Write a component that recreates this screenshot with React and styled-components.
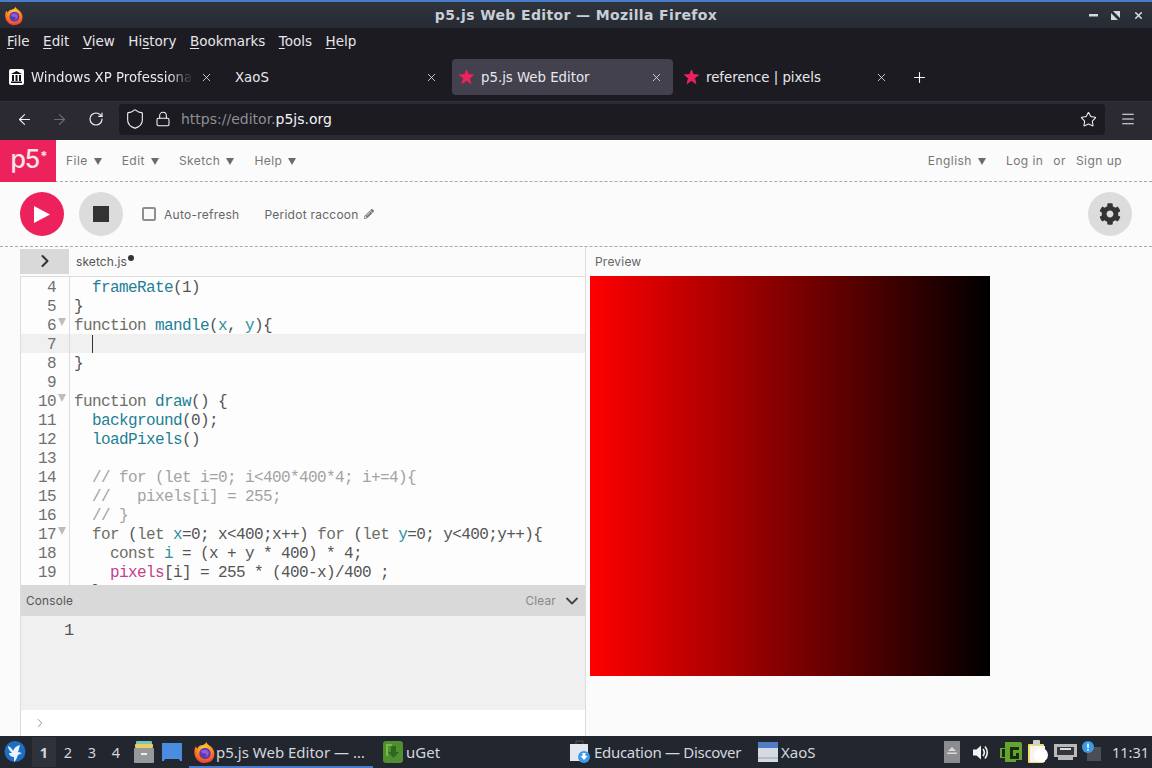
import React from "react";
import styled, { createGlobalStyle } from "styled-components";
import { ArrowLeft, ArrowRight, RotateCw, Shield, Lock, Star, Menu as MenuIcon, X, Plus, ChevronRight, ChevronDown } from "lucide-react";
import { FaCog, FaPencilAlt } from "react-icons/fa";

const Global = createGlobalStyle`
  html, body { margin: 0; padding: 0; height: 768px; overflow: hidden; background: #fbfbfb; }
  * { box-sizing: border-box; }
  #root { height: 768px; }
`;

const Screen = styled.div`
  width: 1152px; height: 768px; display: flex; flex-direction: column; overflow: hidden;
  font-family: "DejaVu Sans", sans-serif;
`;

/* window chrome */
const TitleBar = styled.header`
  height: 28px; flex: none; border-top: 2px solid #4a7dc9; display: flex; align-items: center; justify-content: center; position: relative;
  background: linear-gradient(#30343d, #262a32); color: #c9ced6; font-weight: 700; font-size: 14px; letter-spacing: 0.37px; padding-bottom: 1px;
`;
const WinLogo = styled.span` position: absolute; left: 4px; top: 4px; display: flex; `;
const WinButtons = styled.div`
  position: absolute; right: 8px; top: 0; height: 26px; display: flex; align-items: center; gap: 13px; color: #d5d8dd;
`;
const MenuBar = styled.nav`
  height: 27px; flex: none; background: #1c1b22; color: #e6e6ea; display: flex; align-items: center; gap: 13.5px; padding: 0 0 2px 7px; font-size: 13.5px;
  u { text-decoration-thickness: 1px; text-underline-offset: 2px; }
`;
const TabStrip = styled.div`
  height: 46px; flex: none; background: #1c1b22; display: flex; align-items: center; gap: 4px; padding: 1px 0 3px 2px;
`;
const Tab = styled.div`
  width: 221px; height: 36px; display: flex; align-items: center; padding: 0 10px 0 7px; border-radius: 4px; gap: 7px;
  background: ${(p) => (p.$active ? "#42414d" : "transparent")}; color: #e8e8ec; font-size: 13.3px;
`;
const TabIcon = styled.span` width: 15px; height: 16px; flex: none; display: flex; align-items: center; justify-content: center; `;
const TabLabel = styled.span`
  flex: 1; white-space: nowrap; overflow: hidden;
  padding-left: ${(p) => (p.$plain ? "1px" : "0")};
  ${(p) => p.$fade && "-webkit-mask-image: linear-gradient(90deg,#000 85%,transparent);"}
`;
const NewTab = styled.span` display: flex; margin-left: 9px; color: #fbfbfe; `;
const NavBar = styled.div`
  height: 39px; flex: none; background: #2b2a33; border-top: 1px solid #33323c; display: flex; align-items: center; color: #f2f2f6; padding: 0 14px 4px 16px;
`;
const NavSlot = styled.span` display: flex; margin-right: ${(p) => p.$gap}px; `;
const UrlBar = styled.div`
  width: 986px; height: 31px; background: #1c1b22; border-radius: 4px; display: flex; align-items: center; padding: 0 8px 0 5px; gap: 9px; font-size: 14px; margin-right: 15px;
`;
const UrlText = styled.span` flex: 1; color: #8f8e96; margin-left: 1px; b { font-weight: 400; color: #f4f4f7; } `;

/* p5 editor */
const AppNav = styled.div`
  height: 42px; flex: none; display: flex; align-items: center; border-bottom: 1px dashed #a9a9a9; background: #fbfbfb;
  font-family: Inter, sans-serif; font-size: 12px; letter-spacing: 0.45px; color: #777;
`;
const Logo = styled.div`
  width: 56px; height: 42px; background: #ed225d; color: #fbe4ea; font-family: Inter, sans-serif; font-weight: 500; font-size: 25px; letter-spacing: -1px; display: flex; align-items: center; justify-content: center; margin-right: 10px; padding: 0 0 3px 1px;
  sup { font-size: 13px; font-weight: 700; line-height: 0; position: relative; top: -3px; margin-left: 1px; }
`;
const NavItem = styled.span` display: flex; align-items: center; gap: 6px; margin-right: ${(p) => p.$gap || 0}px; `;
const Caret = styled.span`
  width: 0; height: 0; border-left: 4.5px solid transparent; border-right: 4.5px solid transparent; border-top: 7px solid #6b6b6b; margin-top: 1px;
`;
const Spacer = styled.div` flex: 1; `;
const ToolBar = styled.div`
  height: 65px; flex: none; display: flex; align-items: center; padding: 0 20px; border-bottom: 1px dashed #a9a9a9; background: #fbfbfb;
  font-family: Inter, sans-serif; font-size: 12px; letter-spacing: 0.25px; color: #666;
`;
const RoundButton = styled.button`
  width: 44px; height: 44px; border: 0; padding: 0; border-radius: 50%; display: flex; align-items: center; justify-content: center; flex: none;
  background: ${(p) => (p.$primary ? "#ed225d" : "#dcdcdc")}; margin-right: ${(p) => p.$gap || 0}px;
`;
const Check = styled.span` width: 14px; height: 14px; border: 2px solid #8f8f8f; border-radius: 2px; margin-right: 8px; background: #fbfbfb; `;
const SketchName = styled.span` display: flex; align-items: center; gap: 5px; margin-left: 25px; `;
const Workspace = styled.main` flex: 1; min-height: 0; display: flex; padding-left: 20px; background: #fbfbfb; `;
const LeftPane = styled.section` width: 566px; flex: none; display: flex; flex-direction: column; border-right: 1px solid #dcdcdc; `;
const EditorHead = styled.div`
  height: 29px; flex: none; display: flex; align-items: center; font-family: Inter, sans-serif; font-size: 12px; letter-spacing: 0.1px; color: #555;
`;
const Collapse = styled.div` width: 49px; height: 25px; margin-top: -1px; background: #d9d9d9; display: flex; align-items: center; justify-content: center; color: #333; margin-right: 7px; `;
const FileDot = styled.span` width: 6px; height: 6px; border-radius: 50%; background: #333; margin: -7px 0 0 1px; `;
const Code = styled.div`
  height: 309px; flex: none; overflow: hidden; border-left: 1px solid #dcdcdc; border-top: 1px solid #dcdcdc; background: #fdfdfd;
  font-family: "Liberation Mono", monospace; font-size: 16px; letter-spacing: -0.6px; color: #555;
`;
const Line = styled.div`
  height: 19px; line-height: 22px; display: flex; white-space: pre; background: ${(p) => (p.$active ? "#f0f0f0" : "transparent")};
`;
const Gutter = styled.div` width: 49px; flex: none; display: flex; border-right: 1px solid #dcdcdc; color: #707070; `;
const LineNo = styled.span` width: 35px; text-align: right; `;
const Fold = styled.span`
  margin: 3px 0 0 2px; width: 0; height: 0; border-left: 4.5px solid transparent; border-right: 4.5px solid transparent; border-top: 8px solid #bdbdbd;
`;
const CodeText = styled.div` padding-left: 4px; position: relative; `;
const Cursor = styled.span` position: absolute; left: 22px; top: 1px; width: 1px; height: 18px; background: #333; `;
const TOKEN = { b: "#1f7f96", v: "#2f8f9f", c: "#a3a3a3", p: "#c6408f", k: "#6e6e66" };
const Tok = styled.span` color: ${(p) => TOKEN[p.$k] || "#555"}; `;
const ConsoleHead = styled.div`
  height: 31px; flex: none; background: #d9d9d9; border-left: 1px solid #dcdcdc; display: flex; align-items: center; padding: 1px 3px 0 5px; font-family: Inter, sans-serif; font-size: 11.8px; letter-spacing: 0.2px; color: #555;
`;
const ClearLabel = styled.span` color: #888; margin-right: 6px; `;
const ConsoleBody = styled.div`
  height: 94px; flex: none; background: #f0f0f0; border-left: 1px solid #dcdcdc; font-family: "Liberation Mono", monospace; font-size: 17px; color: #555; padding: 5px 0 0 43px;
`;
const ConsoleInput = styled.div` flex: 1; background: #fff; border-left: 1px solid #dcdcdc; display: flex; align-items: center; padding-left: 12px; color: #8a8a8a; `;
const Preview = styled.section` flex: 1; display: flex; flex-direction: column; padding-left: 4px; `;
const PreviewLabel = styled.div` height: 29px; display: flex; align-items: center; padding-left: 5px; font-family: Inter, sans-serif; font-size: 12px; letter-spacing: 0.2px; color: #666; `;
const Canvas = styled.div` width: 400px; height: 400px; background: linear-gradient(90deg, #ff0000, #000000); `;

/* panel */
const TaskBar = styled.footer`
  height: 32px; flex: none; background: #22262f; color: #d4d7dc; display: flex; align-items: center; font-family: "Noto Sans", sans-serif; font-size: 15px;
`;
const Desk = styled.span`
  width: 24px; height: 30px; display: flex; align-items: center; justify-content: center; font-size: 14.5px;
  background: ${(p) => (p.$on ? "#2e323b" : "transparent")}; font-weight: ${(p) => (p.$on ? 700 : 400)}; border-radius: 2px;
`;
const Slot = styled.span` display: flex; align-items: center; flex: none; margin-left: ${(p) => p.$l || 0}px; `;
const TaskItem = styled.div`
  height: 32px; display: flex; align-items: center; flex: none; gap: ${(p) => p.$g || 0}px; width: ${(p) => p.$w}px; margin-left: ${(p) => p.$l || 0}px; padding-left: ${(p) => p.$pad || 0}px;
  letter-spacing: ${(p) => p.$ls || 0}px;
  border-bottom: ${(p) => (p.$on ? "2px solid #4a7dc9" : "0")}; padding-top: ${(p) => (p.$on ? "2px" : "0")}; white-space: nowrap;
`;
const Clock = styled.span` margin-left: 11px; font-size: 14.5px; `;

const Firefox = ({ s = 20, id = "ffg" }) => (
  <svg width={s} height={s} viewBox="0 0 24 24">
    <defs>
      <radialGradient id={id} cx="0.5" cy="0.3" r="0.8"><stop offset="0" stopColor="#ffd43a" /><stop offset="0.55" stopColor="#ff7a1f" /><stop offset="1" stopColor="#e8243f" /></radialGradient>
    </defs>
    <path d="M14 1c1 3 3 3 5 5 3 3 4 7 3 10-1 5-5 7-10 7S2 19 1.500 13C1 9 2 7 3 5.500c.2 1 .7 1.800 1.500 2.300C6 5 8 4.500 9 4.500 11 4 13 3 14 1z" fill={`url(#${id})`} />
    <circle cx="12.500" cy="13" r="6" fill="#5b3bb0" />
    <path d="M8 11c2-2 6-3 8 0 1 2 0 5-3 6 2-2 1-4-1-4-2 0-3-1-4-2z" fill="#9a5ad6" />
  </svg>
);
const PinkStar = () => (
  <svg width="17" height="16" viewBox="0 0 17 16" fill="#ed225d">
    <path d="M8.500 0 10.600 5.300 16.500 5.600 11.900 9.300 13.500 15.500 8.500 12 3.500 15.500 5.100 9.300 .5 5.600 6.400 5.300z" stroke="#ed225d" strokeWidth="1" strokeLinejoin="round" />
  </svg>
);
const Museum = () => (
  <svg width="15" height="16" viewBox="0 0 15 16">
    <rect width="15" height="16" rx="2" fill="#fff" />
    <path d="M7.500 2 13 5H2zM3 6h2v6H3zM6.500 6h2v6h-2zM10 6h2v6h-2zM2 12.500h11V14H2z" fill="#111" />
  </svg>
);
const Dove = () => (
  <svg width="22" height="24" viewBox="0 0 22 24">
    <circle cx="11" cy="11.500" r="10.500" fill="#1d6fc4" />
    <path d="M4 6c3 1 4 3 5 5 1-3 3-5 7-6-1 3-1 5-2 7l4 1-4 2c-1 3-2 5-4 7l0-5c-3 0-5-2-5-4l3 0C6 11 4 9 4 6z" fill="#e8f3ff" />
  </svg>
);
const Cabinet = () => (
  <svg width="20" height="24" viewBox="0 0 20 24">
    <rect x="2" y="1" width="16" height="4" rx="1" fill="#7cc5b0" />
    <rect x="1" y="4" width="18" height="4" rx="1" fill="#e3d26a" />
    <rect x="0" y="8" width="20" height="15" rx="1" fill="#97999c" />
    <rect x="7" y="13" width="6" height="2" fill="#eee" />
  </svg>
);
const BlueWindow = () => (
  <svg width="20" height="20" viewBox="0 0 20 20"><path d="M0 1h20v18h-2l-1-2H3l-1 2H0z" fill="#4a8ce0" /></svg>
);
const UGet = () => (
  <svg width="20" height="22" viewBox="0 0 20 22">
    <rect width="20" height="22" rx="3" fill="#4f8f2f" />
    <path d="M8 5h5v6h3l-5.500 6L5 11h3z" fill="#2b6a1f" />
    <path d="M3 3h6v2H5v10H3z" fill="#77b84a" />
  </svg>
);
const Bag = () => (
  <svg width="20" height="24" viewBox="0 0 20 24">
    <path d="M6 4V1h7v3" fill="none" stroke="#555" strokeWidth="1" />
    <rect x="0" y="4" width="18" height="17" fill="#e4e8ee" />
    <circle cx="14" cy="17" r="6" fill="#3d9ae8" />
    <path d="M12.500 13h3v3h2L14 20l-3.500-4h2z" fill="#fff" />
  </svg>
);
const XaosWin = () => (
  <svg width="20" height="20" viewBox="0 0 20 20">
    <rect width="20" height="20" fill="#d5d9e2" />
    <rect width="20" height="6" fill="#4f7cc4" />
    <rect y="15" width="20" height="2" fill="#b9bcc6" />
  </svg>
);
const TrayEject = () => (
  <svg width="16" height="22" viewBox="0 0 16 22">
    <rect width="16" height="22" fill="#8b8d90" />
    <path d="M8 6l4 4H4zM3 11.500h10V13H3z" fill="#d9d9d9" />
  </svg>
);
const TraySpeaker = () => (
  <svg width="17" height="17" viewBox="0 0 17 17" fill="none">
    <path d="M1 5.500h3.500L9 1.500v14l-4.500-4H1z" fill="#f4f4f4" />
    <path d="M11 5c1.500 2 1.500 5 0 7M13 2.500c3 3.500 3 8.500 0 12" stroke="#f4f4f4" strokeWidth="1.600" />
  </svg>
);
const TrayG = () => (
  <svg width="23" height="22" viewBox="0 0 23 22">
    <path d="M6 1h15a2 2 0 0 1 2 2v16h-6v2H6V17H1V7h5z" fill="#63a52f" />
    <path d="M11 6h9v3h-6v6h3v-3h3v6h-9z" fill="#1c2a15" />
    <path d="M3 8h3v8H3z" fill="#1c2a15" />
  </svg>
);
const TrayClip = () => (
  <svg width="20" height="24" viewBox="0 0 20 24">
    <rect x="0" y="4" width="16" height="19" rx="1" fill="#efe06a" />
    <rect x="2" y="6" width="15" height="16" fill="#f4f4f4" />
    <rect x="5" y="0" width="7" height="5" rx="1" fill="#cfcfcf" />
    <circle cx="13" cy="15" r="7" fill="#fff" />
  </svg>
);
const TrayNet = () => (
  <svg width="23" height="18" viewBox="0 0 23 18">
    <path d="M0 1h23v13h-4v3H4v-3H0z" fill="#b9b9b9" />
    <path d="M3 4h17v8H3z" fill="#33363c" />
    <path d="M6 5h11v2H6z" fill="#ddd" />
  </svg>
);
const TrayBell = () => (
  <svg width="19" height="22" viewBox="0 0 19 22">
    <rect x="5" y="6" width="14" height="14" fill="#4b4e55" />
    <circle cx="6" cy="6" r="6" fill="#3d9ae8" />
    <rect x="5.200" y="2.500" width="1.600" height="4.500" fill="#fff" />
    <rect x="5.200" y="8" width="1.600" height="1.600" fill="#fff" />
  </svg>
);

const CODE = [
  [4, [["  "], ["frameRate", "b"], ["(1)"]]],
  [5, [["}"]]],
  [6, [["function", "k"], [" "], ["mandle", "b"], ["("], ["x", "v"], [", "], ["y", "v"], ["){"]], true],
  [7, [], false, true],
  [8, [["}"]]],
  [9, []],
  [10, [["function", "k"], [" "], ["draw", "b"], ["() {"]], true],
  [11, [["  "], ["background", "b"], ["(0);"]]],
  [12, [["  "], ["loadPixels", "b"], ["()"]]],
  [13, []],
  [14, [["  // for (let i=0; i<400*400*4; i+=4){", "c"]]],
  [15, [["  //   pixels[i] = 255;", "c"]]],
  [16, [["  // }", "c"]]],
  [17, [["  "], ["for", "k"], [" ("], ["let", "k"], [" "], ["x", "v"], ["=0; x<400;x++) "], ["for", "k"], [" ("], ["let", "k"], [" "], ["y", "v"], ["=0; y<400;y++){"]], true],
  [18, [["    "], ["const", "k"], [" "], ["i", "v"], [" = (x + y * 400) * 4;"]]],
  [19, [["    "], ["pixels", "p"], ["[i] = 255 * (400-x)/400 ;"]]],
  [20, [["  }"]]],
];

const TABS = [
  { label: "Windows XP Professional", icon: <Museum />, fade: true },
  { label: "XaoS", plain: true },
  { label: "p5.js Web Editor", icon: <PinkStar />, active: true },
  { label: "reference | pixels", icon: <PinkStar /> },
];

export default function App() {
  return (
    <Screen>
      <Global />
      <TitleBar>
        <WinLogo><Firefox s={20} id="ffa" /></WinLogo>
        p5.js Web Editor — Mozilla Firefox
        <WinButtons>
          <svg width="9" height="9" viewBox="0 0 9 9"><rect y="3" width="9" height="2.500" fill="currentColor" /></svg>
          <svg width="9" height="9" viewBox="0 0 9 9"><path d="M0 2v7h7zM2 0h7v7z" fill="currentColor" /></svg>
          <X size={11} strokeWidth={3.500} />
        </WinButtons>
      </TitleBar>
      <MenuBar>
        <span><u>F</u>ile</span>
        <span><u>E</u>dit</span>
        <span><u>V</u>iew</span>
        <span>Hi<u>s</u>tory</span>
        <span><u>B</u>ookmarks</span>
        <span><u>T</u>ools</span>
        <span><u>H</u>elp</span>
      </MenuBar>
      <TabStrip>
        {TABS.map((t) => (
          <Tab key={t.label} $active={t.active}>
            {t.icon && <TabIcon>{t.icon}</TabIcon>}
            <TabLabel $fade={t.fade} $plain={t.plain}>{t.label}</TabLabel>
            <X size={13} strokeWidth={1.500} />
          </Tab>
        ))}
        <NewTab><Plus size={17} strokeWidth={1.500} /></NewTab>
      </TabStrip>
      <NavBar>
        <NavSlot $gap={18}><ArrowLeft size={17} strokeWidth={1.600} /></NavSlot>
        <NavSlot $gap={20}><ArrowRight size={17} strokeWidth={1.600} color="#6d6c75" /></NavSlot>
        <NavSlot $gap={15}><RotateCw size={16} strokeWidth={1.700} /></NavSlot>
        <UrlBar>
          <Shield size={22} strokeWidth={1.200} />
          <Lock size={16} strokeWidth={1.600} />
          <UrlText>https://editor.<b>p5js.org</b></UrlText>
          <Star size={17} strokeWidth={1.500} />
        </UrlBar>
        <MenuIcon size={16} strokeWidth={1.600} />
      </NavBar>

      <AppNav>
        <Logo>p5<sup>*</sup></Logo>
        <NavItem $gap={20}>File <Caret /></NavItem>
        <NavItem $gap={20}>Edit <Caret /></NavItem>
        <NavItem $gap={20}>Sketch <Caret /></NavItem>
        <NavItem>Help <Caret /></NavItem>
        <Spacer />
        <NavItem $gap={20}>English <Caret /></NavItem>
        <NavItem $gap={10}>Log in</NavItem>
        <NavItem $gap={10}>or</NavItem>
        <NavItem $gap={30}>Sign up</NavItem>
      </AppNav>
      <ToolBar>
        <RoundButton $primary $gap={15}>
          <svg width="16" height="17" viewBox="0 0 16 17"><path d="M0 0l16 8.500L0 17z" fill="#fff" /></svg>
        </RoundButton>
        <RoundButton $gap={19}>
          <svg width="16" height="16" viewBox="0 0 16 16"><rect width="16" height="16" fill="#333" /></svg>
        </RoundButton>
        <Check />
        <span>Auto-refresh</span>
        <SketchName>Peridot raccoon <FaPencilAlt size={10} color="#777" /></SketchName>
        <Spacer />
        <RoundButton><FaCog size={22} color="#333" /></RoundButton>
      </ToolBar>
      <Workspace>
        <LeftPane>
          <EditorHead>
            <Collapse><ChevronRight size={20} strokeWidth={2.500} /></Collapse>
            sketch.js<FileDot />
          </EditorHead>
          <Code>
            {CODE.map(([n, toks, fold, active]) => (
              <Line key={n} $active={active}>
                <Gutter>
                  <LineNo>{n}</LineNo>
                  {fold && <Fold />}
                </Gutter>
                <CodeText>
                  {active && <Cursor />}
                  {toks.map(([t, k], i) => <Tok key={i} $k={k}>{t}</Tok>)}
                </CodeText>
              </Line>
            ))}
          </Code>
          <ConsoleHead>
            Console
            <Spacer />
            <ClearLabel>Clear</ClearLabel>
            <ChevronDown size={20} strokeWidth={2.200} color="#444" />
          </ConsoleHead>
          <ConsoleBody>1</ConsoleBody>
          <ConsoleInput><ChevronRight size={14} strokeWidth={1.600} /></ConsoleInput>
        </LeftPane>
        <Preview>
          <PreviewLabel>Preview</PreviewLabel>
          <Canvas />
        </Preview>
      </Workspace>
      <TaskBar>
        <Slot $l={4}><Dove /></Slot>
        <Slot $l={6}><Desk $on>1</Desk><Desk>2</Desk><Desk>3</Desk><Desk>4</Desk></Slot>
        <Slot $l={6}><Cabinet /></Slot>
        <Slot $l={8}><BlueWindow /></Slot>
        <TaskItem $w={184} $l={7} $pad={4} $on><Firefox s={23} id="ffb" />p5.js Web Editor — …</TaskItem>
        <TaskItem $w={190} $l={10} $g={3}><UGet />uGet</TaskItem>
        <TaskItem $w={188} $l={-3} $g={4} $ls={-0.3}><Bag />Education — Discover</TaskItem>
        <TaskItem $w={100} $g={3}><XaosWin />XaoS</TaskItem>
        <Slot $l={86}><TrayEject /></Slot>
        <Slot $l={12}><TraySpeaker /></Slot>
        <Slot $l={10}><TrayG /></Slot>
        <Slot $l={6}><TrayClip /></Slot>
        <Slot $l={6}><TrayNet /></Slot>
        <Slot $l={5}><TrayBell /></Slot>
        <Clock>11:31</Clock>
      </TaskBar>
    </Screen>
  );
}
